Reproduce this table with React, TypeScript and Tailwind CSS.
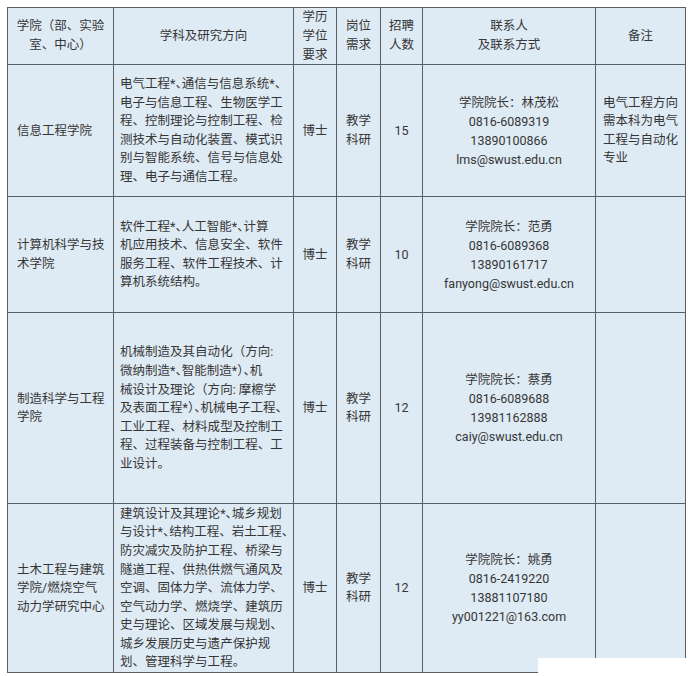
import React from "react";

type Row = {
  college: string[];
  fields: string[];
  count: string;
  contact: string[];
  note: string[];
  h: string;
};

const rows: Row[] = [
  {
    college: ["信息工程学院"],
    fields: [
      "电气工程*、通信与信息系统*、",
      "电子与信息工程、生物医学工",
      "程、控制理论与控制工程、检",
      "测技术与自动化装置、模式识",
      "别与智能系统、信号与信息处",
      "理、电子与通信工程。",
    ],
    count: "15",
    contact: ["学院院长：林茂松", "0816-6089319", "13890100866", "lms@swust.edu.cn"],
    note: ["电气工程方向", "需本科为电气", "工程与自动化", "专业"],
    h: "h-[132px]",
  },
  {
    college: ["计算机科学与技", "术学院"],
    fields: [
      "软件工程*、人工智能*、计算",
      "机应用技术、信息安全、软件",
      "服务工程、软件工程技术、计",
      "算机系统结构。",
    ],
    count: "10",
    contact: ["学院院长：范勇", "0816-6089368", "13890161717", "fanyong@swust.edu.cn"],
    note: [],
    h: "h-[116px]",
  },
  {
    college: ["制造科学与工程", "学院"],
    fields: [
      "机械制造及其自动化（方向:",
      "微纳制造*、智能制造*）、机",
      "械设计及理论（方向: 摩檫学",
      "及表面工程*）、机械电子工程、",
      "工业工程、材料成型及控制工",
      "程、过程装备与控制工程、工",
      "业设计。",
    ],
    count: "12",
    contact: ["学院院长：蔡勇", "0816-6089688", "13981162888", "caiy@swust.edu.cn"],
    note: [],
    h: "h-[191px]",
  },
  {
    college: ["土木工程与建筑", "学院/燃烧空气", "动力学研究中心"],
    fields: [
      "建筑设计及其理论*、城乡规划",
      "与设计*、结构工程、岩土工程、",
      "防灾减灾及防护工程、桥梁与",
      "隧道工程、供热供燃气通风及",
      "空调、固体力学、流体力学、",
      "空气动力学、燃烧学、建筑历",
      "史与理论、区域发展与规划、",
      "城乡发展历史与遗产保护规",
      "划、管理科学与工程。",
    ],
    count: "12",
    contact: ["学院院长：姚勇", "0816-2419220", "13881107180", "yy001221@163.com"],
    note: [],
    h: "h-[169px]",
  },
];

const cell = "border border-[#5a5f66] align-middle p-0";

// the source squeezes punctuation that follows an asterisk: use half-width glyphs
function Squeezed({ text }: { text: string }) {
  const chars = Array.from(text);
  return (
    <>
      {chars.map((c, i) => {
        const prev = chars[i - 1];
        const half = (c === "、" || c === "）") && (prev === "*" || prev === "）");
        return half ? (
          <span key={i} className="[font-feature-settings:'halt']">
            {c}
          </span>
        ) : (
          <React.Fragment key={i}>{c}</React.Fragment>
        );
      })}
    </>
  );
}

function Lines({ items, squeeze }: { items: string[]; squeeze?: boolean }) {
  return (
    <>
      {items.map((t, i) => (
        <div key={i} className="whitespace-nowrap">
          {squeeze ? <Squeezed text={t} /> : t}
        </div>
      ))}
    </>
  );
}

export default function App() {
  return (
    <div
      className="relative w-[690px] h-[676px] bg-white overflow-hidden pt-[7px] pl-[7px] text-[12.5px] leading-[18.6px] text-[#363636]"
      style={{ fontFamily: 'Roboto, "Noto Sans CJK SC", sans-serif' }}
    >
      <table className="table-fixed border-collapse w-[678px] bg-[#deeaf4]">
        <colgroup>
          <col className="w-[106px]" />
          <col className="w-[180px]" />
          <col className="w-[43px]" />
          <col className="w-[44px]" />
          <col className="w-[42px]" />
          <col className="w-[173px]" />
          <col className="w-[90px]" />
        </colgroup>
        <thead>
          <tr className="h-[57px] text-center leading-[18.8px]">
            <th className={`${cell} font-normal`}>
              <Lines items={["学院（部、实验", "室、中心）"]} />
            </th>
            <th className={`${cell} font-normal`}>学科及研究方向</th>
            <th className={`${cell} font-normal`}>
              <Lines items={["学历", "学位", "要求"]} />
            </th>
            <th className={`${cell} font-normal`}>
              <Lines items={["岗位", "需求"]} />
            </th>
            <th className={`${cell} font-normal`}>
              <Lines items={["招聘", "人数"]} />
            </th>
            <th className={`${cell} font-normal`}>
              <Lines items={["联系人", "及联系方式"]} />
            </th>
            <th className={`${cell} font-normal`}>备注</th>
          </tr>
        </thead>
        <tbody>
          {rows.map((r, i) => (
            <tr key={i} className={r.h}>
              <td className={`${cell} pl-[9px]`}>
                <Lines items={r.college} />
              </td>
              <td className={`${cell} pl-[6px]`}>
                <Lines items={r.fields} squeeze />
              </td>
              <td className={`${cell} text-center`}>博士</td>
              <td className={`${cell} text-center`}>
                <Lines items={["教学", "科研"]} />
              </td>
              <td className={`${cell} text-center`}>{r.count}</td>
              <td className={`${cell} text-center leading-[19px]`}>
                <Lines items={r.contact} />
              </td>
              <td className={`${cell} pl-[7px]`}>
                <Lines items={r.note} />
              </td>
            </tr>
          ))}
        </tbody>
      </table>
      <div className="absolute left-[538px] top-[658px] w-[152px] h-[18px] bg-white" />
    </div>
  );
}
